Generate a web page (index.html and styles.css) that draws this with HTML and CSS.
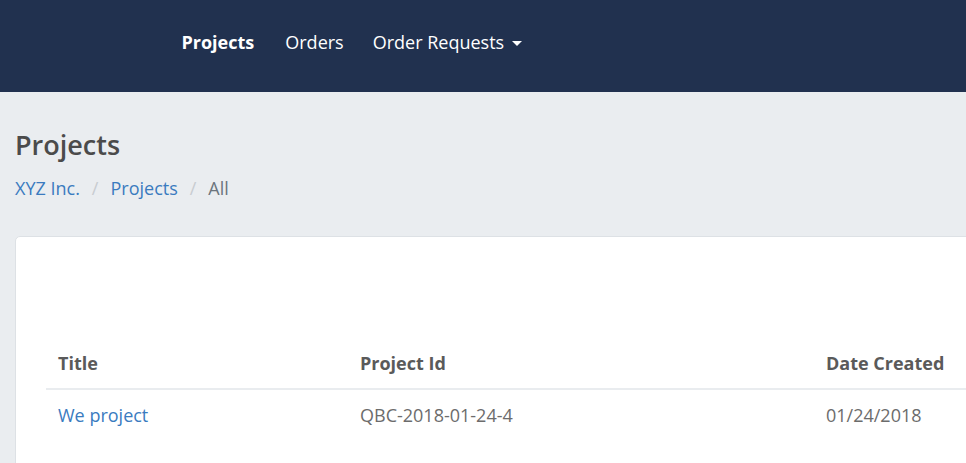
FILE: index.html
```html
<!DOCTYPE html>
<html lang="en">
<head>
<meta charset="utf-8">
<title>Projects</title>
<link rel="stylesheet" href="styles.css">
</head>
<body>
<header class="navbar">
  <nav class="nav">
    <a class="nav-link active" href="#">Projects</a>
    <a class="nav-link" href="#">Orders</a>
    <a class="nav-link dropdown" href="#">Order Requests<span class="caret"></span></a>
  </nav>
</header>
<main class="page">
  <h1 class="page-title">Projects</h1>
  <ol class="breadcrumb">
    <li><a href="#">XYZ Inc.</a></li>
    <li class="sep">/</li>
    <li><a href="#">Projects</a></li>
    <li class="sep">/</li>
    <li class="current">All</li>
  </ol>
  <section class="card">
    <div class="toolbar"></div>
    <table class="table">
      <thead>
        <tr>
          <th class="col-title">Title</th>
          <th class="col-id">Project Id</th>
          <th class="col-date">Date Created</th>
        </tr>
      </thead>
      <tbody>
        <tr>
          <td><a href="#">We project</a></td>
          <td>QBC-2018-01-24-4</td>
          <td>01/24/2018</td>
        </tr>
      </tbody>
    </table>
  </section>
</main>
</body>
</html>
```
FILE: styles.css
```css
html, body {
  margin: 0;
  padding: 0;
}
body {
  font-family: "Open Sans", "Noto Sans", sans-serif;
  font-size: 18px;
  background: #eaedf0;
  color: #6c6c6c;
  overflow: hidden;
  height: 463px;
}
a {
  color: #3a7bbf;
  text-decoration: none;
}
.navbar {
  background: #21314f;
  height: 92px;
  display: flex;
  align-items: center;
}
.nav {
  display: flex;
  padding-left: 166px;
  margin-top: -8px;
}
.nav-link {
  color: #fff;
  padding: 0 15.5px;
  line-height: 26px;
  display: flex;
  align-items: center;
}
.nav-link.dropdown {
  margin-left: -2px;
}
.nav-link.active {
  font-weight: 700;
}
.caret {
  display: inline-block;
  width: 0;
  height: 0;
  margin-left: 8px;
  margin-top: 2px;
  border-top: 5px solid #fff;
  border-left: 5px solid transparent;
  border-right: 5px solid transparent;
}
.page {
  padding: 0 0 0 15px;
  overflow: hidden;
  height: 371px;
  box-sizing: border-box;
}
.page-title {
  margin: 35px 0 0;
  font-size: 27px;
  font-weight: 600;
  color: #4b4b4b;
  line-height: 36px;
}
.breadcrumb {
  list-style: none;
  margin: 11.5px 0 0;
  padding: 0;
  display: flex;
  gap: 12px;
  line-height: 27px;
}
.breadcrumb .sep {
  color: #c8ccd0;
}
.breadcrumb .current {
  color: #6c757d;
}
.card {
  margin-top: 34.5px;
  width: 1200px;
  background: #fff;
  border: 1px solid #dde1e5;
  border-radius: 5px;
  padding: 0 30px 80px;
  box-sizing: border-box;
}
.toolbar {
  height: 111px;
}
.table {
  width: 100%;
  border-collapse: collapse;
  color: #6c6c6c;
}
.table th, .table td {
  text-align: left;
  padding: 12px;
  line-height: 26px;
}
.table th {
  font-weight: 700;
  color: #5a5a5a;
  border-bottom: 2px solid #e9ecef;
  padding-top: 0;
  padding-bottom: 10px;
  line-height: 30px;
}
.col-title { width: 278px; }
.col-id { width: 442px; }
```
